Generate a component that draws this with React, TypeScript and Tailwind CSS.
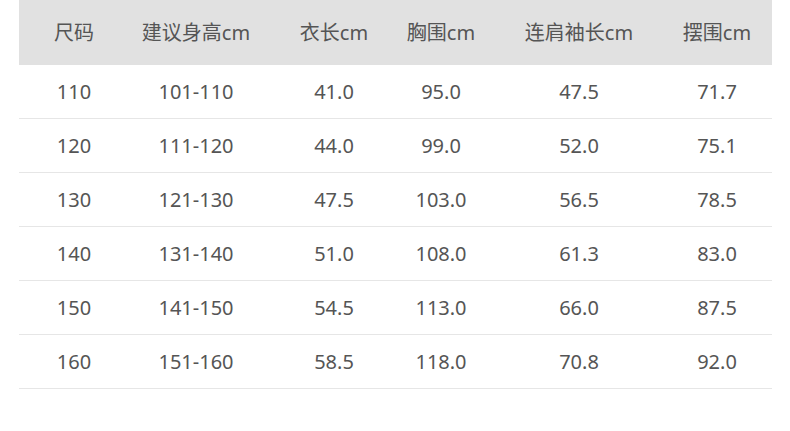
import React from "react";

const headers = ["尺码", "建议身高cm", "衣长cm", "胸围cm", "连肩袖长cm", "摆围cm"];
const rows = [
  ["110", "101-110", "41.0", "95.0", "47.5", "71.7"],
  ["120", "111-120", "44.0", "99.0", "52.0", "75.1"],
  ["130", "121-130", "47.5", "103.0", "56.5", "78.5"],
  ["140", "131-140", "51.0", "108.0", "61.3", "83.0"],
  ["150", "141-150", "54.5", "113.0", "66.0", "87.5"],
  ["160", "151-160", "58.5", "118.0", "70.8", "92.0"],
];

const cellPad = ["", "", "pl-[19px]", "pl-[18px]", "pl-[18px]", ""];

export default function App() {
  return (
    <div
      className="w-[790px] h-[431px] bg-white pl-[19px] pr-[18px]"
      style={{ fontFamily: '"Noto Sans", "Noto Sans CJK SC", sans-serif' }}
    >
      <div className="grid grid-cols-[110px_134px_123px_92px_184px_110px] h-[65px] items-center bg-[#e1e1e1] text-[20px] text-[#555555]">
        {headers.map((h, i) => (
          <div key={i} className={`text-center whitespace-nowrap ${cellPad[i]}`}>
            {h}
          </div>
        ))}
      </div>
      {rows.map((r, ri) => (
        <div
          key={ri}
          className="grid grid-cols-[110px_134px_123px_92px_184px_110px] h-[54px] items-center border-b border-[#e6e6e6] text-[20px] text-[#555555]"
        >
          {r.map((c, i) => (
            <div key={i} className={`text-center whitespace-nowrap ${cellPad[i]}`}>
              {c}
            </div>
          ))}
        </div>
      ))}
    </div>
  );
}
